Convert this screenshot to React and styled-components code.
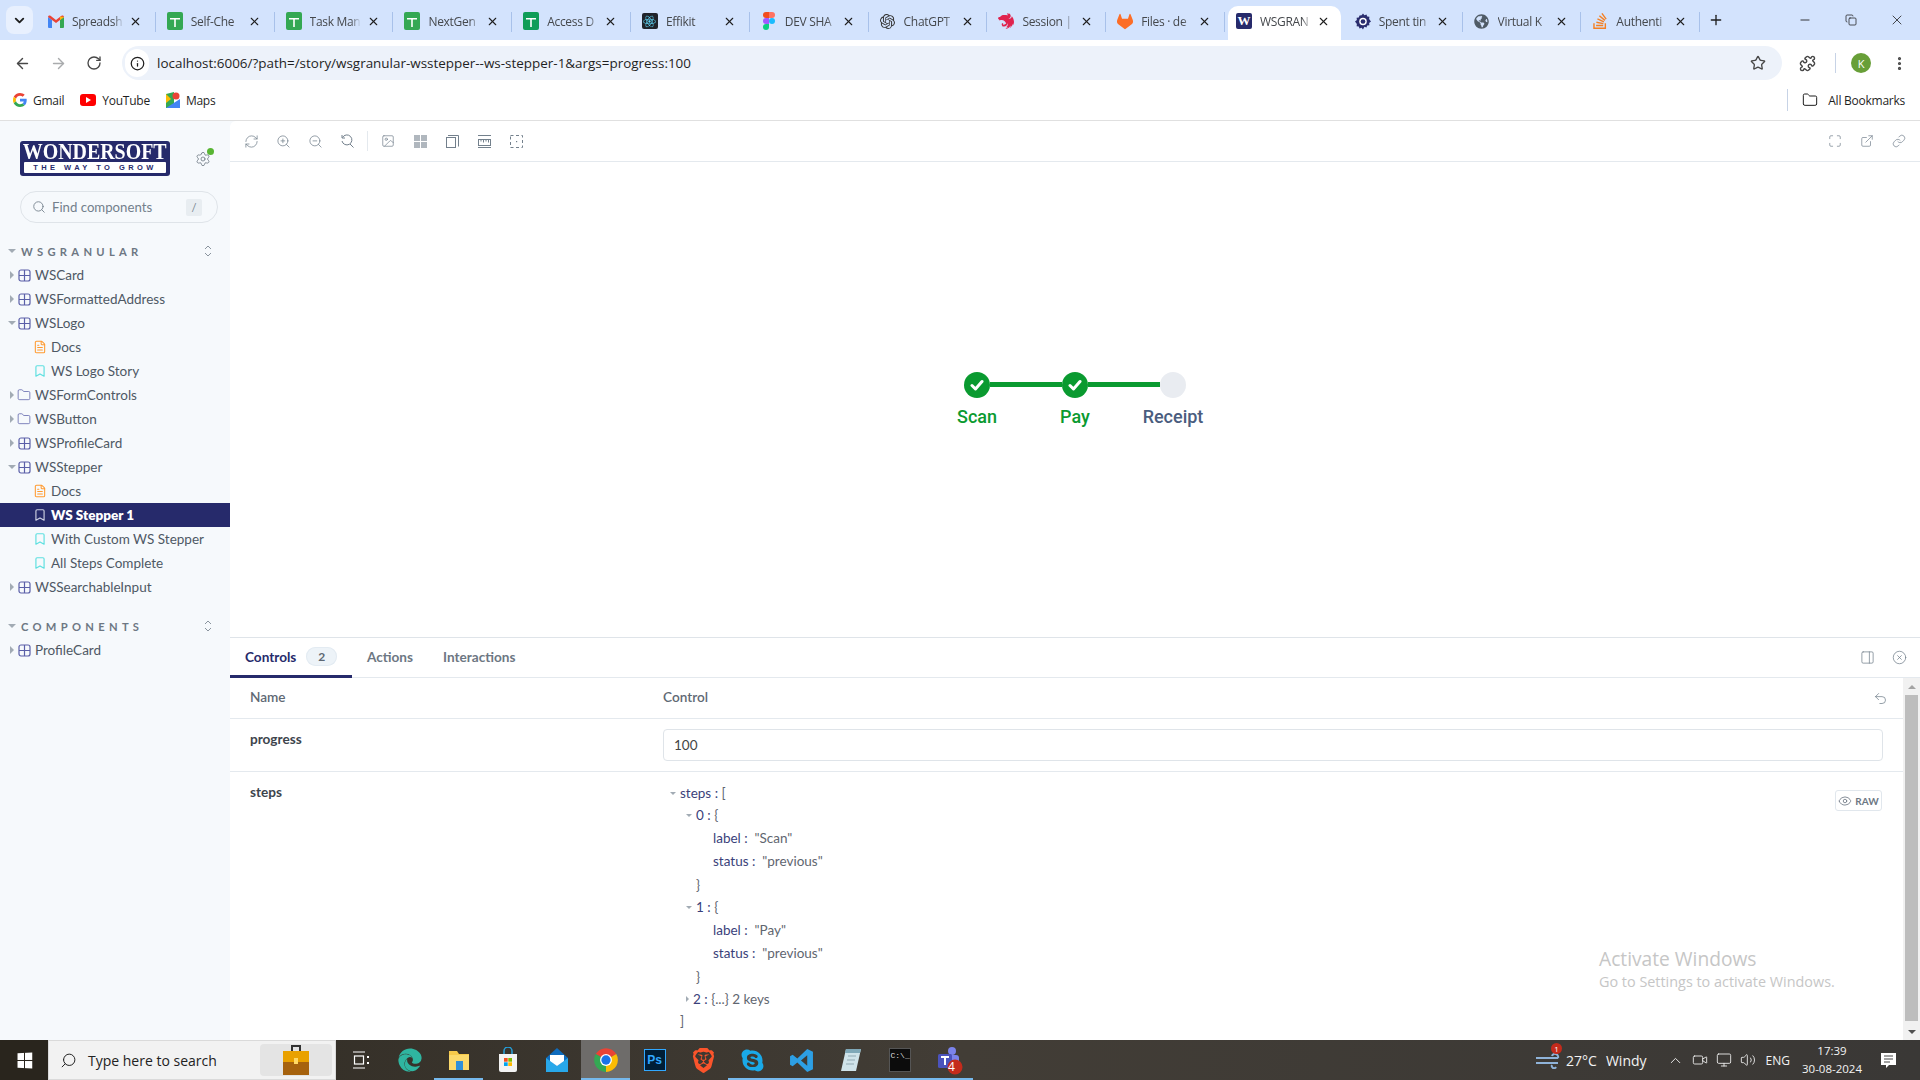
import React from 'react'
import styled, { createGlobalStyle } from 'styled-components'
import {
  ArrowLeft, ArrowRight, Bookmark, ChevronDown, ChevronUp, CircleX, Eye, ExternalLink, FileText, Folder,
  Image, Info, Link, Maximize, Minus, MoreVertical, PanelRight, Plus, Puzzle, RefreshCw, RotateCw,
  Search, Settings, Star, Undo2, Volume2, X, ZoomIn, ZoomOut, Copy, Monitor, Video,
} from 'lucide-react'
import { FaEdge, FaGlobeAmericas, FaReact, FaSkype } from 'react-icons/fa'
import { SiBrave, SiGitlab, SiNestjs, SiOpenai, SiStackoverflow } from 'react-icons/si'

const GlobalStyle = createGlobalStyle`
  html, body { margin: 0; padding: 0; }
  body { width: 1920px; height: 1080px; overflow: hidden; background: #fff; font-family: "Open Sans", sans-serif; }
  * { box-sizing: border-box; }
`

const Page = styled.div`
  width: 1920px;
  height: 1080px;
  display: flex;
  flex-direction: column;
  position: relative;
  overflow: hidden;
`

/* browser chrome */
const TabStrip = styled.div`
  height: 40px;
  background: #d3e3fd;
  display: flex;
  align-items: stretch;
  padding-left: 6px;
  font-family: "Open Sans", sans-serif;
`
const TabListButton = styled.div`
  width: 27px;
  height: 28px;
  margin: 6px 4px 0 0;
  border-radius: 8px;
  background: #e8f0fe;
  color: #1f1f1f;
  display: flex;
  align-items: center;
  justify-content: center;
`
const TabSlot = styled.div`
  width: 118.8px;
  padding: 6px 3px 0 3px;
  display: flex;
  position: relative;
  &::after {
    content: '';
    display: ${p => (p.$plain ? 'none' : 'block')};
    position: absolute;
    right: 0;
    top: 12px;
    height: 20px;
    width: 1px;
    background: #a8c1ea;
  }
`
const Tab = styled.div`
  flex: 1;
  display: flex;
  align-items: center;
  padding: 0 9px 4px 8px;
  border-radius: 10px 10px 0 0;
  background: ${p => (p.$active ? '#fff' : 'transparent')};
  min-width: 0;
`
const Favicon = styled.div`
  width: 16px;
  height: 16px;
  flex: none;
  display: flex;
  align-items: center;
  justify-content: center;
`
const SheetIcon = styled.div`
  width: 16px;
  height: 18px;
  flex: none;
  border-radius: 2px;
  background: ${p => p.$color || '#34a853'};
  display: flex;
  align-items: center;
  justify-content: center;
`
const DarkSquare = styled.div`
  width: 16px;
  height: 16px;
  background: ${p => p.$bg};
  border-radius: 2px;
  color: ${p => p.$fg || '#fff'};
  display: flex;
  align-items: center;
  justify-content: center;
  font: bold 13px "Liberation Serif", serif;
`
const TabTitle = styled.div`
  flex: 1;
  margin: 0 4px 0 8px;
  font-size: 12px;
  letter-spacing: -0.3px;
  color: #45484c;
  white-space: nowrap;
  overflow: hidden;
  -webkit-mask-image: linear-gradient(90deg, #000 80%, transparent 100%);
  mask-image: linear-gradient(90deg, #000 80%, transparent 100%);
`
const TabClose = styled.div`
  flex: none;
  width: 16px;
  display: flex;
  justify-content: center;
  color: #1f1f1f;
`
const NewTab = styled.div`
  width: 24px;
  margin-left: 4px;
  display: flex;
  align-items: center;
  justify-content: center;
  color: #1f1f1f;
`
const WindowButtons = styled.div`
  margin-left: auto;
  display: flex;
  align-items: center;
  color: #1f1f1f;
`
const WindowButton = styled.div`
  width: 46px;
  display: flex;
  justify-content: center;
`

const Toolbar = styled.div`
  height: 40px;
  background: #fff;
  display: flex;
  align-items: center;
  padding: 6px 0 0 4px;
  border-radius: 0 10px 0 0;
  color: #474747;
`
const NavButton = styled.div`
  width: 36px;
  display: flex;
  justify-content: center;
  color: ${p => (p.$dim ? '#a9abad' : '#474747')};
  margin-left: ${p => p.$ml || 0}px;
`
const AddressBar = styled.div`
  width: 1660px;
  height: 34px;
  margin-left: 10px;
  border-radius: 17px;
  background: #edf2fa;
  display: flex;
  align-items: center;
  padding: 0 16px 0 3px;
`
const SiteInfo = styled.div`
  width: 24px;
  height: 28px;
  border-radius: 14px;
  background: #fff;
  display: flex;
  align-items: center;
  justify-content: center;
  color: #1f1f1f;
`
const Url = styled.div`
  margin-left: 8px;
  flex: 1;
  font-size: 13.45px;
  color: #1f1f1f;
  white-space: nowrap;
`
const ToolbarRight = styled.div`
  display: flex;
  align-items: center;
  margin-left: 17px;
`
const ToolbarSep = styled.div`
  width: 1px;
  height: 20px;
  background: #c7d3e6;
  margin: 0 15px 0 19px;
`
const Avatar = styled.div`
  width: 20px;
  height: 20px;
  border-radius: 50%;
  background: #689f38;
  color: #fff;
  font-size: 11px;
  display: flex;
  align-items: center;
  justify-content: center;
`
const BookmarksBar = styled.div`
  height: 41px;
  background: #fff;
  border-bottom: 1px solid #e0e0e0;
  display: flex;
  align-items: center;
  padding: 0 15px 0 13px;
  font-size: 12px;
  letter-spacing: -0.25px;
  color: #1f1f1f;
`
const BookmarkItem = styled.div`
  display: flex;
  align-items: center;
  gap: 6px;
  margin-right: 16px;
`
const BookmarksEnd = styled.div`
  margin-left: auto;
  display: flex;
  align-items: center;
  gap: 10px;
`
const BookmarkSep = styled.div`
  width: 1px;
  height: 22px;
  background: #c7d3e6;
  margin-right: 4px;
`
const YouTubeIcon = styled.div`
  width: 16px;
  height: 12px;
  border-radius: 3px;
  background: #f00;
  display: flex;
  align-items: center;
  justify-content: center;
  &::after {
    content: '';
    border-left: 5px solid #fff;
    border-top: 3px solid transparent;
    border-bottom: 3px solid transparent;
  }
`

/* storybook */
const Workspace = styled.div`
  flex: 1;
  min-height: 0;
  display: flex;
  background: #f6f9fc;
  font-family: "Lato", sans-serif;
`
const Sidebar = styled.aside`
  width: 230px;
  flex: none;
  padding-top: 20px;
  display: flex;
  flex-direction: column;
`
const SidebarTop = styled.div`
  display: flex;
  align-items: center;
  padding-left: 20px;
`
const Logo = styled.div`
  width: 150px;
  height: 35px;
  background: #262a6b;
  border-radius: 3px;
  padding: 0 3px;
  display: flex;
  flex-direction: column;
  align-items: center;
`
const LogoName = styled.div`
  font: bold 24px/21px "Liberation Serif", serif;
  color: #fff;
  white-space: nowrap;
  transform: scaleX(0.83);
`
const LogoTag = styled.div`
  width: 142px;
  height: 11px;
  background: #fff;
  border-radius: 1px;
  color: #262a6b;
  font: bold 7.5px/11px "Liberation Sans", sans-serif;
  letter-spacing: 3.45px;
  text-align: center;
  white-space: nowrap;
`
const StatusIcon = styled.div`
  margin-left: 25px;
  width: 16px;
  height: 16px;
  position: relative;
  color: #6b7680;
`
const StatusDot = styled.div`
  position: absolute;
  right: -3px;
  top: -3px;
  width: 7px;
  height: 7px;
  border-radius: 50%;
  background: #58b533;
`
const SearchBox = styled.div`
  margin: 15px 12px 0 20px;
  height: 32px;
  border: 1px solid #dfe4e9;
  border-radius: 16px;
  display: flex;
  align-items: center;
  padding: 0 15px 0 11px;
  color: #73808c;
  font-size: 13.2px;
`
const SearchLabel = styled.span`
  margin-left: 6px;
  flex: 1;
`
const SlashKey = styled.span`
  width: 16px;
  height: 17px;
  border-radius: 2px;
  background: #e8edf1;
  font-size: 11px;
  display: flex;
  align-items: center;
  justify-content: center;
`
const SectionHead = styled.div`
  height: 24px;
  margin-top: ${p => p.$top}px;
  display: flex;
  align-items: center;
  padding: 0 17px 0 8px;
  font-size: 11.2px;
  font-weight: 700;
  letter-spacing: 4.3px;
  color: #6d7783;
`
const SectionLabel = styled.span`
  margin-left: 5px;
  flex: 1;
`
const Caret = styled.span`
  width: 0;
  height: 0;
  flex: none;
  ${p => (p.$open
    ? `border-left: 4px solid transparent; border-right: 4px solid transparent; border-top: 4px solid #a2abb4;`
    : `border-top: 4px solid transparent; border-bottom: 4px solid transparent; border-left: 4px solid #a2abb4; margin: 0 2px 0 2px;`)}
`
const TreeRow = styled.div`
  height: 24px;
  display: flex;
  align-items: center;
  padding-left: ${p => (p.$leaf ? 33 : 8)}px;
  background: ${p => (p.$selected ? '#262a6b' : 'transparent')};
  color: ${p => (p.$selected ? '#fff' : '#4e5864')};
  font-size: 13.5px;
  font-weight: ${p => (p.$selected ? 800 : 400)};
  white-space: nowrap;
`
const TreeIcon = styled.span`
  width: 14px;
  margin: 0 4px 0 ${p => (p.$leaf ? 0 : 1)}px;
  display: flex;
  justify-content: center;
  color: ${p => p.$color};
`

const Main = styled.main`
  flex: 1;
  min-width: 0;
  background: #fff;
  border-radius: 6px 0 0 0;
  display: flex;
  flex-direction: column;
  position: relative;
`
const StoryBar = styled.div`
  height: 41px;
  flex: none;
  border-bottom: 1px solid #e4e9ee;
  display: flex;
  align-items: center;
  padding-left: 5px;
  color: #73808c;
`
const BarIcon = styled.div`
  width: 32px;
  display: flex;
  justify-content: center;
`
const BarDivider = styled.div`
  width: 1px;
  height: 20px;
  background: #e4e9ee;
  margin: 0 4px;
`
const BarEnd = styled.div`
  margin-left: auto;
  display: flex;
  padding-right: 5px;
`
const Canvas = styled.div`
  flex: 1;
  min-height: 0;
  display: flex;
  align-items: center;
  justify-content: center;
  padding-top: 1px;
  font-family: "Roboto", sans-serif;
`
const Stepper = styled.div`
  display: flex;
  flex-direction: column;
  align-items: center;
`
const StepTrack = styled.div`
  display: flex;
  align-items: center;
`
const StepDot = styled.div`
  width: 26px;
  height: 26px;
  border-radius: 50%;
  background: ${p => (p.$done ? '#0a9a30' : '#e9ecf1')};
  color: #fff;
  display: flex;
  align-items: center;
  justify-content: center;
`
const StepLine = styled.div`
  width: 72px;
  height: 5px;
  background: #0a9a30;
`
const StepLabels = styled.div`
  display: grid;
  grid-template-columns: repeat(3, 98px);
  margin-top: 7px;
`
const StepLabel = styled.div`
  text-align: center;
  font-size: 18px;
  font-weight: 500;
  line-height: 24px;
  color: ${p => (p.$done ? '#0a9a30' : '#4a5d7e')};
`

const Panel = styled.section`
  height: 403px;
  flex: none;
  border-top: 1px solid #dfe4e9;
  display: flex;
  flex-direction: column;
  background: #fff;
`
const PanelTabs = styled.div`
  height: 40px;
  flex: none;
  border-bottom: 1px solid #e4e9ee;
  display: flex;
  align-items: stretch;
`
const PanelTab = styled.div`
  display: flex;
  align-items: center;
  padding: 0 15px;
  font-size: 13.6px;
  font-weight: 700;
  color: ${p => (p.$active ? '#262a6b' : '#6d7783')};
  height: 40px;
  border-bottom: 3px solid ${p => (p.$active ? '#262a6b' : 'transparent')};
  width: ${p => p.$w}px;
`
const Badge = styled.span`
  margin-left: 10px;
  width: 31px;
  height: 19px;
  border-radius: 10px;
  background: #edf3f8;
  box-shadow: inset 0 0 0 1px #e3ebf2;
  color: #5d6773;
  font-size: 12px;
  display: flex;
  align-items: center;
  justify-content: center;
`
const PanelActions = styled.div`
  margin-left: auto;
  display: flex;
  align-items: center;
  padding-right: 5px;
  color: #73808c;
`
const PanelBody = styled.div`
  flex: 1;
  min-height: 0;
  display: flex;
`
const ArgsTable = styled.div`
  flex: 1;
  min-width: 0;
  display: flex;
  flex-direction: column;
  position: relative;
  color: #333;
  font-size: 13.6px;
`
const ArgRow = styled.div`
  display: flex;
  height: ${p => p.$h}px;
  flex: ${p => (p.$grow ? 1 : 'none')};
  padding: 0 20px;
  border-bottom: ${p => (p.$last ? 'none' : '1px solid #e4e9ee')};
  position: relative;
  min-height: 0;
  overflow: hidden;
`
const NameCell = styled.div`
  width: 413px;
  flex: none;
  padding-top: ${p => p.$top}px;
  font-weight: ${p => (p.$head ? 600 : 700)};
  color: ${p => (p.$head ? '#5f6974' : '#3d444c')};
  line-height: 20px;
`
const ControlCell = styled.div`
  flex: 1;
  min-width: 0;
  padding-top: ${p => p.$top}px;
  line-height: 20px;
  color: #5f6974;
  font-weight: 600;
`
const HeadIcon = styled.div`
  display: flex;
  align-items: center;
  color: #73808c;
  margin-right: -5px;
`
const ValueInput = styled.div`
  height: 32px;
  border: 1px solid #dfe4e9;
  border-radius: 4px;
  padding: 0 10px;
  color: #444;
  font-weight: 400;
  font-size: 13.5px;
  line-height: 30px;
`
const JsonLine = styled.div`
  height: ${p => p.$h || 22}px;
  display: flex;
  align-items: center;
  padding-left: ${p => p.$pad}px;
  font-weight: 400;
  font-size: 13.5px;
  white-space: pre;
`
const JsonCaret = styled.span`
  width: 0;
  height: 0;
  flex: none;
  margin: 0 4px 0 -10px;
  ${p => (p.$open
    ? `border-left: 3px solid transparent; border-right: 3px solid transparent; border-top: 3px solid #a2abb4;`
    : `border-top: 3px solid transparent; border-bottom: 3px solid transparent; border-left: 3px solid #a2abb4;`)}
`
const JsonKey = styled.span`
  color: #3a3f7a;
`
const JsonValue = styled.span`
  color: #5f6670;
`
const RawButton = styled.div`
  position: absolute;
  right: 21px;
  top: 18px;
  width: 47px;
  height: 21px;
  border: 1px solid #e1e7ed;
  border-radius: 3px;
  display: flex;
  align-items: center;
  justify-content: center;
  gap: 3px;
  font-size: 10px;
  font-weight: 700;
  color: #6d7783;
`
const ScrollTrack = styled.div`
  width: 17px;
  flex: none;
  background: #f1f1f1;
  display: flex;
  flex-direction: column;
  align-items: center;
`
const ScrollArrow = styled.div`
  height: 17px;
  display: flex;
  align-items: center;
  &::after {
    content: '';
    border-left: 4px solid transparent;
    border-right: 4px solid transparent;
    ${p => (p.$up ? 'border-bottom: 4px solid #a3a3a3;' : 'border-top: 4px solid #505050;')}
  }
`
const ScrollThumb = styled.div`
  width: 13px;
  height: 326px;
  background: #bdbdbd;
`
const ScrollSpace = styled.div`
  flex: 1;
`
const Watermark = styled.div`
  position: absolute;
  left: 1599px;
  top: 945px;
  font-family: "Open Sans", sans-serif;
  color: #c6c6c6;
  pointer-events: none;
`
const WatermarkTitle = styled.div`
  font-size: 19.2px;
  line-height: 27px;
`
const WatermarkText = styled.div`
  font-size: 14.4px;
  line-height: 19px;
`

/* windows taskbar */
const Taskbar = styled.footer`
  height: 40px;
  flex: none;
  background: linear-gradient(90deg, #2f2a22 0, #423d36 50%, #3a3836 100%);
  display: flex;
  align-items: stretch;
  color: #fff;
  font-family: "Open Sans", sans-serif;
`
const StartButton = styled.div`
  width: 48px;
  background: #29251d;
  display: flex;
  align-items: center;
  justify-content: center;
`
const WinLogo = styled.div`
  display: grid;
  grid-template-columns: 7px 7px;
  grid-template-rows: 7px 7px;
  gap: 1px;
  transform: perspective(30px) rotateY(-12deg);
`
const WinPane = styled.div`
  background: #fff;
`
const TaskSearch = styled.div`
  width: 288px;
  background: #f2f2f2;
  display: flex;
  align-items: center;
  padding: 0 3px 0 11px;
  color: #222;
  font-size: 14px;
  border: 1px solid #dadada;
`
const MirroredSearch = styled.span`
  display: flex;
  transform: scaleX(-1);
`
const TaskSearchLabel = styled.span`
  margin-left: 11px;
  flex: 1;
`
const BriefcaseSlot = styled.div`
  width: 72px;
  height: 32px;
  border-radius: 4px;
  background: #e4e4e4;
  display: flex;
  align-items: center;
  justify-content: center;
`
const TaskCell = styled.div`
  width: 49px;
  display: flex;
  align-items: center;
  justify-content: center;
  position: relative;
  background: ${p => (p.$active ? '#6e6c6a' : 'transparent')};
  box-shadow: ${p => (p.$running ? `inset 0 -2px 0 #76b9ed` : 'none')};
`
const PsIcon = styled.div`
  width: 22px;
  height: 22px;
  background: #001e36;
  border: 1px solid #31a8ff;
  color: #31a8ff;
  font: bold 12px "Liberation Sans", sans-serif;
  display: flex;
  align-items: center;
  justify-content: center;
`
const TermIcon = styled.div`
  width: 22px;
  height: 24px;
  background: #0c0c0c;
  border: 1px solid #555;
  color: #ddd;
  font: 8px "Liberation Mono", monospace;
  padding: 2px 1px;
`
const TeamsBadge = styled.span`
  position: absolute;
  left: 24px;
  top: 19px;
  font-size: 12px;
  line-height: 15px;
  color: #fff;
`
const Tray = styled.div`
  margin-left: auto;
  display: flex;
  align-items: center;
  font-size: 14px;
  color: #f3f3f3;
`
const Weather = styled.div`
  position: relative;
  width: 24px;
  margin-right: 6px;
  display: flex;
`
const WeatherBadge = styled.div`
  position: absolute;
  right: -2px;
  top: -8px;
  width: 11px;
  height: 11px;
  border-radius: 50%;
  background: #c42b1c;
  color: #fff;
  font-size: 8px;
  line-height: 11px;
  text-align: center;
`
const TrayText = styled.span`
  margin: 0 ${p => p.$mr || 0}px 0 ${p => p.$ml || 0}px;
  white-space: nowrap;
  font-size: ${p => p.$size || 14}px;
`
const TrayIcon = styled.div`
  width: 24px;
  display: flex;
  justify-content: center;
`
const Clock = styled.div`
  width: 68px;
  margin-left: 8px;
  text-align: center;
  font-size: 11.5px;
  line-height: 18px;
`
const NotifyIcon = styled.div`
  width: 54px;
  display: flex;
  justify-content: center;
  padding-right: 10px;
`

const Sheet = ({ color }) => (
  <SheetIcon $color={color}>
    <svg width="10" height="12" viewBox="0 0 10 12"><path d="M0 3h10v1.5H5.800V12H4.200V4.500H0z" fill="#fff" /></svg>
  </SheetIcon>
)
const GmailIcon = () => (
  <svg width="16" height="13" viewBox="0 0 16 13">
    <path d="M0 2l4 3v8H1a1 1 0 0 1-1-1z" fill="#4285f4" />
    <path d="M16 2l-4 3v8h3a1 1 0 0 0 1-1z" fill="#34a853" />
    <path d="M0 2C0 .5 1.500 0 2.500.8L8 5l5.500-4.200C14.500 0 16 .5 16 2l-4 3-4 3-4-3z" fill="#ea4335" />
    <path d="M12 1.500L16 2l-4 3z" fill="#fbbc04" />
  </svg>
)
const GoogleG = () => (
  <svg width="14" height="14" viewBox="0 0 48 48">
    <path fill="#EA4335" d="M24 9.500c3.540 0 6.710 1.220 9.210 3.600l6.850-6.850C35.900 2.380 30.470 0 24 0 14.620 0 6.510 5.380 2.560 13.220l7.980 6.190C12.430 13.720 17.740 9.500 24 9.500z" />
    <path fill="#4285F4" d="M46.980 24.550c0-1.570-.15-3.090-.38-4.550H24v9.020h12.940c-.58 2.960-2.260 5.480-4.780 7.180l7.730 6c4.510-4.180 7.090-10.360 7.090-17.650z" />
    <path fill="#FBBC05" d="M10.530 28.590c-.48-1.450-.76-2.990-.76-4.590s.27-3.140.76-4.590l-7.980-6.190C.92 16.460 0 20.120 0 24c0 3.880.92 7.540 2.560 10.780l7.970-6.190z" />
    <path fill="#34A853" d="M24 48c6.480 0 11.930-2.130 15.890-5.810l-7.730-6c-2.150 1.450-4.920 2.300-8.160 2.300-6.260 0-11.570-4.220-13.470-9.910l-7.980 6.190C6.510 42.620 14.620 48 24 48z" />
  </svg>
)
const FigmaIcon = () => (
  <svg width="12" height="18" viewBox="0 0 12 18">
    <path d="M6 0H3a3 3 0 0 0 0 6h3z" fill="#f24e1e" />
    <path d="M6 0h3a3 3 0 0 1 0 6H6z" fill="#ff7262" />
    <path d="M6 6H3a3 3 0 0 0 0 6h3z" fill="#a259ff" />
    <circle cx="9" cy="9" r="3" fill="#1abcfe" />
    <path d="M6 12H3a3 3 0 1 0 3 3z" fill="#0acf83" />
  </svg>
)
const GearW = () => (
  <svg width="17" height="17" viewBox="0 0 17 17">
    <path d="M8.500 0l1.500 1.800 2.200-.8.800 2.200 2.300.3-.3 2.300L17 8.500l-2 1.700.3 2.300-2.300.3-.8 2.200-2.200-.8L8.500 17 7 15.200l-2.200.8L4 13.800l-2.300-.3.300-2.300L0 8.500l2-1.700-.3-2.300L4 4.200 4.800 2 7 1.800z" fill="#2a2d6e" />
    <circle cx="8.500" cy="8.500" r="4" fill="#fff" />
    <circle cx="8.500" cy="8.500" r="2.500" fill="#2a2d6e" />
  </svg>
)

const TABS = [
  { title: 'Spreadsh', icon: <GmailIcon /> },
  { title: 'Self-Che', icon: <Sheet /> },
  { title: 'Task Man', icon: <Sheet /> },
  { title: 'NextGen', icon: <Sheet /> },
  { title: 'Access D', icon: <Sheet color="#0f9d58" /> },
  { title: 'Effikit', icon: <DarkSquare $bg="#20232a" $fg="#61dafb"><FaReact size={13} /></DarkSquare> },
  { title: 'DEV SHA', icon: <FigmaIcon /> },
  { title: 'ChatGPT', icon: <SiOpenai size={15} color="#333" /> },
  { title: 'Session |', icon: <SiNestjs size={16} color="#e0234e" /> },
  { title: 'Files · de', icon: <SiGitlab size={17} color="#fc6d26" /> },
  { title: 'WSGRAN', icon: <DarkSquare $bg="#262a6b">W</DarkSquare>, active: true },
  { title: 'Spent tin', icon: <GearW /> },
  { title: 'Virtual K', icon: <FaGlobeAmericas size={15} color="#4f5b66" /> },
  { title: 'Authenti', icon: <SiStackoverflow size={16} color="#f48024" /> },
]

const ComponentGlyph = () => (
  <svg width="13" height="13" viewBox="0 0 13 13" fill="none" stroke="currentColor" strokeWidth="1.2">
    <rect x="1" y="1" width="11" height="11" rx="2" />
    <path d="M6.500 1v11M1 6.500h11" />
  </svg>
)

const TREE_TOP = [
  { label: 'WSCard', kind: 'component' },
  { label: 'WSFormattedAddress', kind: 'component' },
  { label: 'WSLogo', kind: 'component', open: true },
  { label: 'Docs', kind: 'docs' },
  { label: 'WS Logo Story', kind: 'story' },
  { label: 'WSFormControls', kind: 'folder' },
  { label: 'WSButton', kind: 'folder' },
  { label: 'WSProfileCard', kind: 'component' },
  { label: 'WSStepper', kind: 'component', open: true },
  { label: 'Docs', kind: 'docs' },
  { label: 'WS Stepper 1', kind: 'story', selected: true },
  { label: 'With Custom WS Stepper', kind: 'story' },
  { label: 'All Steps Complete', kind: 'story' },
  { label: 'WSSearchableInput', kind: 'component' },
]

function TreeItem({ item }) {
  const leaf = item.kind === 'docs' || item.kind === 'story'
  let icon = <ComponentGlyph />
  let color = '#5a5fa8'
  if (item.kind === 'folder') icon = <Folder size={14} strokeWidth={1.3} />
  if (item.kind === 'docs') { icon = <FileText size={14} strokeWidth={1.8} />; color = '#ff9a2f' }
  if (item.kind === 'story') { icon = <Bookmark size={14} strokeWidth={2} />; color = item.selected ? '#c9cce0' : '#5fe0e0' }
  return (
    <TreeRow $leaf={leaf} $selected={item.selected}>
      {!leaf && <Caret $open={item.open} />}
      <TreeIcon $leaf={leaf} $color={color}>{icon}</TreeIcon>
      {item.label}
    </TreeRow>
  )
}

const SectionToggle = () => (
  <svg width="10" height="14" viewBox="0 0 10 14" fill="none" stroke="#8a949e" strokeWidth="1">
    <path d="M2 5l3-3 3 3M2 9l3 3 3-3" />
  </svg>
)

/* storybook toolbar glyphs that lucide has no close match for */
const ToolSvg = ({ children }) => (
  <svg width="15" height="15" viewBox="0 0 15 15" fill="none" stroke="currentColor" strokeWidth="1">
    {children}
  </svg>
)
const ZoomResetIcon = () => (
  <ToolSvg>
    <path d="M2.500 3.500A5 5 0 1 1 2 7" />
    <path d="M2 1v3h3M10 10l3.500 3.500" />
  </ToolSvg>
)
const GridIcon = () => (
  <svg width="15" height="15" viewBox="0 0 15 15" fill="#b0b7be">
    <rect x="1" y="1" width="6" height="6" />
    <rect x="8" y="1" width="6" height="6" />
    <rect x="1" y="8" width="6" height="6" />
    <rect x="8" y="8" width="6" height="6" />
  </svg>
)
const StackIcon = () => (
  <ToolSvg>
    <rect x="1.500" y="3.500" width="9" height="10" />
    <path d="M3 1.500h10.500v11" />
  </ToolSvg>
)
const MeasureIcon = () => (
  <ToolSvg>
    <path d="M1 1.500h13M1 13.500h13" />
    <rect x="1.500" y="5.500" width="12" height="6" />
    <path d="M4 5.500v2M6.500 5.500v3M9 5.500v2M11.500 5.500v3" />
  </ToolSvg>
)
const FocusIcon = () => (
  <ToolSvg>
    <rect x="1.500" y="1.500" width="12" height="12" strokeDasharray="3 2.500" />
    <rect x="7" y="7" width="1.200" height="1.200" fill="currentColor" stroke="none" />
  </ToolSvg>
)
const TaskViewIcon = () => (
  <svg width="18" height="18" viewBox="0 0 18 18" fill="none" stroke="#fff" strokeWidth="1.200">
    <path d="M1 1h12M1 17h12" />
    <rect x="2.500" y="5" width="9" height="8" />
    <rect x="15" y="5" width="2" height="2" fill="#fff" stroke="none" />
    <rect x="15" y="11" width="2" height="2" fill="#fff" stroke="none" />
  </svg>
)

const ChromeLogo = () => (
  <svg width="26" height="26" viewBox="0 0 24 24">
    <path d="M12 12L21.500 6.500A11 11 0 0 0 2.500 6.500Z" fill="#ea4335" />
    <path d="M12 12L2.500 6.500A11 11 0 0 0 12 23Z" fill="#34a853" />
    <path d="M12 12L12 23A11 11 0 0 0 21.500 6.500Z" fill="#fbbc04" />
    <circle cx="12" cy="12" r="5.500" fill="#fff" />
    <circle cx="12" cy="12" r="4.300" fill="#1a73e8" />
  </svg>
)
const ExplorerIcon = () => (
  <svg width="24" height="24" viewBox="0 0 24 24">
    <path d="M2 3h8l2 3h10v16H2z" fill="#f6c94a" />
    <path d="M2 7h20v15H2z" fill="#fbd96b" />
    <rect x="9" y="13" width="7" height="9" fill="#2f8fd8" />
  </svg>
)
const StoreIcon = () => (
  <svg width="24" height="26" viewBox="0 0 24 26">
    <path d="M3 7h18v16a2 2 0 0 1-2 2H5a2 2 0 0 1-2-2z" fill="#f3f3f3" />
    <path d="M8 7V4a4 4 0 0 1 8 0v3" fill="none" stroke="#25a0dc" strokeWidth="1.500" />
    <rect x="8" y="11" width="3.700" height="3.700" fill="#f25022" />
    <rect x="12.300" y="11" width="3.700" height="3.700" fill="#7fba00" />
    <rect x="8" y="15.300" width="3.700" height="3.700" fill="#00a4ef" />
    <rect x="12.300" y="15.300" width="3.700" height="3.700" fill="#ffb900" />
  </svg>
)
const MailIcon = () => (
  <svg width="26" height="26" viewBox="0 0 26 26">
    <path d="M13 1l11 10v14H2V11z" fill="#0f6cbd" />
    <path d="M2 11l11 8 11-8v14H2z" fill="#28a8ea" />
    <path d="M6 8h14v6l-7 5-7-5z" fill="#fff" />
  </svg>
)
const CodeIcon = () => (
  <svg width="25" height="25" viewBox="0 0 24 24">
    <path d="M17.500 1L23 3.600v16.800L17.500 23 8 14l-4.500 3.500L1 16V8l2.500-1.500L8 10zM17.500 7l-6 5 6 5z" fill="#2d9fe4" />
  </svg>
)
const NotepadIcon = () => (
  <svg width="24" height="26" viewBox="0 0 24 26">
    <path d="M7 2h15l-5 22H2z" fill="#cfe3ea" />
    <path d="M7 2h15l-1 4H6z" fill="#7fa8b8" />
    <path d="M9 9h8M8 13h8M7 17h8" stroke="#91a9b3" />
  </svg>
)
const TeamsIcon = () => (
  <svg width="28" height="30" viewBox="0 0 28 30">
    <circle cx="17" cy="6" r="4" fill="#7b83eb" />
    <rect x="9" y="10" width="15" height="13" rx="3" fill="#7b83eb" />
    <rect x="3" y="9" width="14" height="14" rx="1.500" fill="#4b53bc" />
    <path d="M6 12h8M10 12v8" stroke="#fff" strokeWidth="2" />
    <circle cx="20" cy="22" r="7.500" fill="#c42b1c" />
  </svg>
)
const BriefcaseIcon = () => (
  <svg width="30" height="32" viewBox="0 0 30 32">
    <path d="M11 7V2h8v5" fill="none" stroke="#333" strokeWidth="2" />
    <rect x="2" y="7" width="26" height="11" fill="#e9a100" />
    <rect x="2" y="18" width="26" height="13" fill="#a6620e" />
    <rect x="13" y="14" width="4" height="6" fill="#ffd966" />
  </svg>
)
const CheckMark = () => (
  <svg width="14" height="12" viewBox="0 0 14 12" fill="none" stroke="#fff" strokeWidth="3" strokeLinecap="round" strokeLinejoin="round">
    <path d="M2 6.500l3.500 3.500L12 2.500" />
  </svg>
)

export default function App() {
  return (
    <Page>
      <GlobalStyle />
      <TabStrip>
        <TabListButton><ChevronDown size={15} strokeWidth={3} /></TabListButton>
        {TABS.map(t => (
          <TabSlot key={t.title} $plain={t.active}>
            <Tab $active={t.active}>
              <Favicon>{t.icon}</Favicon>
              <TabTitle>{t.title}</TabTitle>
              <TabClose><X size={13} strokeWidth={2} /></TabClose>
            </Tab>
          </TabSlot>
        ))}
        <NewTab><Plus size={16} strokeWidth={2} /></NewTab>
        <WindowButtons>
          <WindowButton><Minus size={14} strokeWidth={1.5} /></WindowButton>
          <WindowButton><Copy size={12} strokeWidth={1.5} /></WindowButton>
          <WindowButton><X size={16} strokeWidth={1.2} /></WindowButton>
        </WindowButtons>
      </TabStrip>

      <Toolbar>
        <NavButton><ArrowLeft size={17} strokeWidth={2} /></NavButton>
        <NavButton $dim><ArrowRight size={17} strokeWidth={2} /></NavButton>
        <NavButton><RotateCw size={16} strokeWidth={2} /></NavButton>
        <AddressBar>
          <SiteInfo><Info size={15} strokeWidth={2} /></SiteInfo>
          <Url>localhost:6006/?path=/story/wsgranular-wsstepper--ws-stepper-1&amp;args=progress:100</Url>
          <Star size={16} strokeWidth={2} />
        </AddressBar>
        <ToolbarRight>
          <Puzzle size={17} strokeWidth={2} />
          <ToolbarSep />
          <Avatar>K</Avatar>
          <NavButton $ml={10}><MoreVertical size={17} strokeWidth={2.5} /></NavButton>
        </ToolbarRight>
      </Toolbar>

      <BookmarksBar>
        <BookmarkItem><GoogleG />Gmail</BookmarkItem>
        <BookmarkItem><YouTubeIcon />YouTube</BookmarkItem>
        <BookmarkItem>
          <svg width="14" height="16" viewBox="0 0 14 16">
            <path d="M0 2l8-2v16H0z" fill="#34a853" />
            <path d="M0 16l14-9v9z" fill="#4285f4" />
            <path d="M0 2l5 5-5 4z" fill="#fbbc04" />
            <circle cx="10" cy="4" r="3.500" fill="#ea4335" />
          </svg>
          Maps
        </BookmarkItem>
        <BookmarksEnd>
          <BookmarkSep />
          <Folder size={16} strokeWidth={1.5} />
          All Bookmarks
        </BookmarksEnd>
      </BookmarksBar>

      <Workspace>
        <Sidebar>
          <SidebarTop>
            <Logo>
              <LogoName>WONDERSOFT</LogoName>
              <LogoTag>THE WAY TO GROW</LogoTag>
            </Logo>
            <StatusIcon>
              <Settings size={16} strokeWidth={1.2} />
              <StatusDot />
            </StatusIcon>
          </SidebarTop>
          <SearchBox>
            <Search size={14} strokeWidth={1.5} />
            <SearchLabel>Find components</SearchLabel>
            <SlashKey>/</SlashKey>
          </SearchBox>
          <SectionHead $top={16}>
            <Caret $open />
            <SectionLabel>WSGRANULAR</SectionLabel>
            <SectionToggle />
          </SectionHead>
          {TREE_TOP.map((item, i) => <TreeItem key={i} item={item} />)}
          <SectionHead $top={15}>
            <Caret $open />
            <SectionLabel>COMPONENTS</SectionLabel>
            <SectionToggle />
          </SectionHead>
          <TreeItem item={{ label: 'ProfileCard', kind: 'component' }} />
        </Sidebar>

        <Main>
          <StoryBar>
            <BarIcon><RefreshCw size={15} strokeWidth={1.2} /></BarIcon>
            <BarIcon><ZoomIn size={15} strokeWidth={1.2} /></BarIcon>
            <BarIcon><ZoomOut size={15} strokeWidth={1.2} /></BarIcon>
            <BarIcon><ZoomResetIcon /></BarIcon>
            <BarDivider />
            <BarIcon><Image size={14} strokeWidth={1.2} /></BarIcon>
            <BarIcon><GridIcon /></BarIcon>
            <BarIcon><StackIcon /></BarIcon>
            <BarIcon><MeasureIcon /></BarIcon>
            <BarIcon><FocusIcon /></BarIcon>
            <BarEnd>
              <BarIcon><Maximize size={14} strokeWidth={1.2} /></BarIcon>
              <BarIcon><ExternalLink size={14} strokeWidth={1.2} /></BarIcon>
              <BarIcon><Link size={14} strokeWidth={1.2} /></BarIcon>
            </BarEnd>
          </StoryBar>

          <Canvas>
            <Stepper>
              <StepTrack>
                <StepDot $done><CheckMark /></StepDot>
                <StepLine />
                <StepDot $done><CheckMark /></StepDot>
                <StepLine />
                <StepDot />
              </StepTrack>
              <StepLabels>
                <StepLabel $done>Scan</StepLabel>
                <StepLabel $done>Pay</StepLabel>
                <StepLabel>Receipt</StepLabel>
              </StepLabels>
            </Stepper>
          </Canvas>

          <Panel>
            <PanelTabs>
              <PanelTab $active $w={122}>Controls<Badge>2</Badge></PanelTab>
              <PanelTab>Actions</PanelTab>
              <PanelTab>Interactions</PanelTab>
              <PanelActions>
                <BarIcon><PanelRight size={15} strokeWidth={1.2} /></BarIcon>
                <BarIcon><CircleX size={15} strokeWidth={1.2} /></BarIcon>
              </PanelActions>
            </PanelTabs>
            <PanelBody>
              <ArgsTable>
                <ArgRow $h={41}>
                  <NameCell $head $top={9}>Name</NameCell>
                  <ControlCell $top={9}>Control</ControlCell>
                  <HeadIcon><Undo2 size={15} strokeWidth={1.2} /></HeadIcon>
                </ArgRow>
                <ArgRow $h={53}>
                  <NameCell $top={10}>progress</NameCell>
                  <ControlCell $top={10}><ValueInput>100</ValueInput></ControlCell>
                </ArgRow>
                <ArgRow $grow $last>
                  <NameCell $top={10}>steps</NameCell>
                  <ControlCell $top={10}>
                    <JsonLine $pad={17}><JsonCaret $open /><JsonKey>steps : </JsonKey><JsonValue>[</JsonValue></JsonLine>
                    <JsonLine $pad={33}><JsonCaret $open /><JsonKey>0 : </JsonKey><JsonValue>{'{'}</JsonValue></JsonLine>
                    <JsonLine $h={23} $pad={50}><JsonKey>label :  </JsonKey><JsonValue>"Scan"</JsonValue></JsonLine>
                    <JsonLine $h={24} $pad={50}><JsonKey>status :  </JsonKey><JsonValue>"previous"</JsonValue></JsonLine>
                    <JsonLine $h={23} $pad={33}><JsonValue>{'}'}</JsonValue></JsonLine>
                    <JsonLine $pad={33}><JsonCaret $open /><JsonKey>1 : </JsonKey><JsonValue>{'{'}</JsonValue></JsonLine>
                    <JsonLine $h={23} $pad={50}><JsonKey>label :  </JsonKey><JsonValue>"Pay"</JsonValue></JsonLine>
                    <JsonLine $h={24} $pad={50}><JsonKey>status :  </JsonKey><JsonValue>"previous"</JsonValue></JsonLine>
                    <JsonLine $h={23} $pad={33}><JsonValue>{'}'}</JsonValue></JsonLine>
                    <JsonLine $pad={33}><JsonCaret /><JsonKey>2 : </JsonKey><JsonValue>{'{...}'} 2 keys</JsonValue></JsonLine>
                    <JsonLine $pad={17}><JsonValue>]</JsonValue></JsonLine>
                  </ControlCell>
                  <RawButton><Eye size={14} strokeWidth={1.4} />RAW</RawButton>
                </ArgRow>
              </ArgsTable>
              <ScrollTrack>
                <ScrollArrow $up />
                <ScrollThumb />
                <ScrollSpace />
                <ScrollArrow />
              </ScrollTrack>
            </PanelBody>
          </Panel>
        </Main>
      </Workspace>

      <Taskbar>
        <StartButton>
          <WinLogo><WinPane /><WinPane /><WinPane /><WinPane /></WinLogo>
        </StartButton>
        <TaskSearch>
          <MirroredSearch><Search size={17} strokeWidth={1.4} /></MirroredSearch>
          <TaskSearchLabel>Type here to search</TaskSearchLabel>
          <BriefcaseSlot><BriefcaseIcon /></BriefcaseSlot>
        </TaskSearch>
        <TaskCell><TaskViewIcon /></TaskCell>
        <TaskCell><FaEdge size={24} color="#2fb5a0" /></TaskCell>
        <TaskCell $running><ExplorerIcon /></TaskCell>
        <TaskCell><StoreIcon /></TaskCell>
        <TaskCell><MailIcon /></TaskCell>
        <TaskCell $active $running><ChromeLogo /></TaskCell>
        <TaskCell><PsIcon>Ps</PsIcon></TaskCell>
        <TaskCell><SiBrave size={25} color="#fb542b" /></TaskCell>
        <TaskCell $running><FaSkype size={25} color="#1aa9e8" /></TaskCell>
        <TaskCell $running><CodeIcon /></TaskCell>
        <TaskCell $running><NotepadIcon /></TaskCell>
        <TaskCell $running><TermIcon>C:\_</TermIcon></TaskCell>
        <TaskCell $running><TeamsIcon /><TeamsBadge>4</TeamsBadge></TaskCell>
        <Tray>
          <Weather>
            <svg width="24" height="18" viewBox="0 0 24 18" fill="none" stroke="#8fb3d9" strokeWidth="2">
              <path d="M0 7h22M0 12h22M16 5a3 3 0 0 1 6 2M16 14a2 2 0 0 0 4 2" />
            </svg>
            <WeatherBadge>1</WeatherBadge>
          </Weather>
          <TrayText $mr={9}>27°C</TrayText>
          <TrayText $mr={17}>Windy</TrayText>
          <TrayIcon><ChevronUp size={17} strokeWidth={1.3} /></TrayIcon>
          <TrayIcon><Video size={16} strokeWidth={1.3} /></TrayIcon>
          <TrayIcon><Monitor size={16} strokeWidth={1.3} /></TrayIcon>
          <TrayIcon><Volume2 size={16} strokeWidth={1.3} /></TrayIcon>
          <TrayText $size={12} $ml={6}>ENG</TrayText>
          <Clock>17:39<br />30-08-2024</Clock>
          <NotifyIcon>
            <svg width="17" height="17" viewBox="0 0 17 17">
              <path d="M1 1h15v12H9l-3 3v-3H1z" fill="#fff" />
              <path d="M4 4h9M4 7h9M4 10h6" stroke="#444" />
            </svg>
          </NotifyIcon>
        </Tray>
      </Taskbar>

      <Watermark>
        <WatermarkTitle>Activate Windows</WatermarkTitle>
        <WatermarkText>Go to Settings to activate Windows.</WatermarkText>
      </Watermark>
    </Page>
  )
}
